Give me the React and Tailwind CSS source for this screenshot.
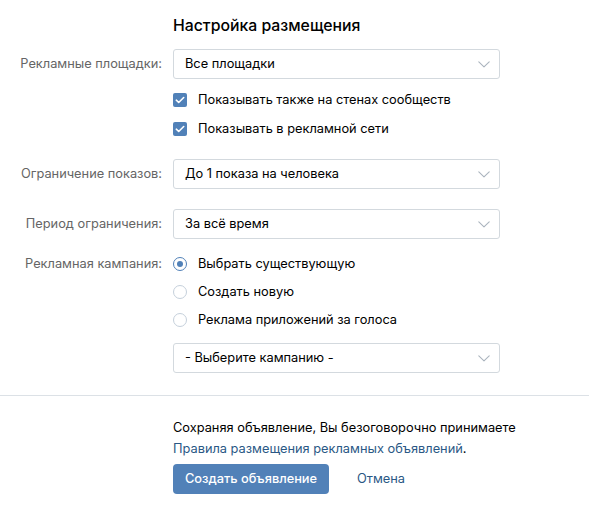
import React from 'react';

const Chevron = () => (
  <svg width="12" height="7" viewBox="0 0 12 7" className="shrink-0">
    <path d="M0.8 0.8l5.2 5L11.2 0.8" fill="none" stroke="#aab4be" strokeWidth="1.1" strokeLinecap="round" strokeLinejoin="round" />
  </svg>
);

const Select = ({ value }) => (
  <div className="flex h-[30px] w-[327px] items-center justify-between rounded-[3px] border border-[#d3d9de] bg-white pl-[11px] pr-[9px] text-[12.8px] text-[#000]">
    <span>{value}</span>
    <Chevron />
  </div>
);

const Checkbox = ({ label }) => (
  <div className="flex h-[29px] items-center">
    <span className="flex h-[14px] w-[14px] items-center justify-center rounded-[2px] bg-[#5181b8]">
      <svg width="10" height="8" viewBox="0 0 10 8">
        <path d="M1.3 4.2l2.4 2.3L8.7 1.5" fill="none" stroke="#fff" strokeWidth="1.6" strokeLinecap="round" strokeLinejoin="round" />
      </svg>
    </span>
    <span className="ml-[11px] text-[12.8px] text-black">{label}</span>
  </div>
);

const Radio = ({ label, checked }) => (
  <div className="flex h-[28px] items-center">
    <span className={`flex h-[14px] w-[14px] items-center justify-center rounded-full border ${checked ? 'border-[#5181b8]' : 'border-[#c5d0db]'} bg-white`}>
      {checked && <span className="h-[6px] w-[6px] rounded-full bg-[#5181b8]" />}
    </span>
    <span className="ml-[11px] text-[12.8px] text-black">{label}</span>
  </div>
);

const Row = ({ label, children, className = '' }) => (
  <div className={`flex ${className}`}>
    <div className="w-[162px] shrink-0 whitespace-nowrap text-right text-[12.8px] text-[#656565]">{label}</div>
    <div className="ml-[11px]">{children}</div>
  </div>
);

export default function App() {
  return (
    <div className="h-[519px] w-[589px] bg-white" style={{ fontFamily: 'Inter, "Liberation Sans", Arial, sans-serif' }}>
      <div className="pt-[16px]">
        <div className="ml-[173px] text-[15.8px] font-medium leading-[20px] text-black">Настройка размещения</div>

        <Row label={<div className="leading-[30px]">Рекламные площадки:</div>} className="mt-[13px]">
          <Select value="Все площадки" />
          <div className="mt-[6px]">
            <Checkbox label="Показывать также на стенах сообществ" />
            <Checkbox label="Показывать в рекламной сети" />
          </div>
        </Row>

        <Row label={<div className="leading-[30px]">Ограничение показов:</div>} className="mt-[16px]">
          <Select value="До 1 показа на человека" />
        </Row>

        <Row label={<div className="leading-[30px]">Период ограничения:</div>} className="mt-[20px]">
          <Select value="За всё время" />
        </Row>

        <Row label={<div className="leading-[28px]">Рекламная кампания:</div>} className="mt-[11px]">
          <Radio label="Выбрать существующую" checked />
          <Radio label="Создать новую" />
          <Radio label="Реклама приложений за голоса" />
          <div className="mt-[9px]">
            <Select value="- Выберите кампанию -" />
          </div>
        </Row>
      </div>

      <div className="mt-[22px] h-px bg-[#dce1e6]" />

      <div className="ml-[173px] pt-[21px] text-[12.8px]">
        <div className="leading-[21px] text-black">Сохраняя объявление, Вы безоговорочно принимаете</div>
        <div className="leading-[21px] text-[#2a5885]">
          Правила размещения рекламных объявлений<span className="text-black">.</span>
        </div>
        <div className="mt-[5px] flex items-center">
          <button className="h-[30px] w-[156px] rounded-[4px] bg-[#5181b8] text-[12.8px] font-medium text-white">Создать объявление</button>
          <span className="ml-[28px] text-[12.8px] text-[#2a5885]">Отмена</span>
        </div>
      </div>
    </div>
  );
}
